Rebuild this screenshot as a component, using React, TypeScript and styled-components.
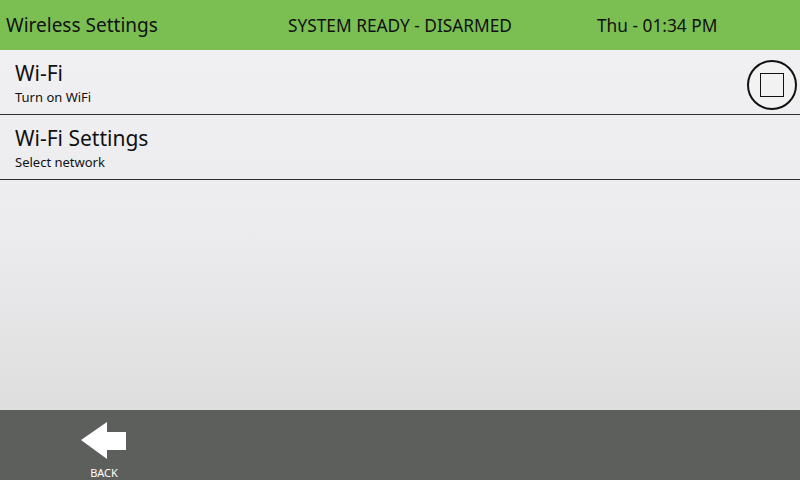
import React from 'react';
import styled, { createGlobalStyle } from 'styled-components';

const GlobalStyle = createGlobalStyle`
  html, body {
    margin: 0;
    padding: 0;
    width: 800px;
    height: 480px;
    overflow: hidden;
    font-family: "Noto Sans", "Open Sans", "DejaVu Sans", sans-serif;
  }
`;

const Screen = styled.div`
  width: 800px;
  height: 480px;
  display: flex;
  flex-direction: column;
`;

const Header = styled.header`
  height: 50px;
  background-color: #7bbf53;
  display: flex;
  align-items: center;
  color: #111;
  font-size: 17.3px;
`;

const Title = styled.div`
  width: 282px;
  padding-left: 6px;
  font-size: 19px;
`;

const Status = styled.div`
  width: 309px;
`;

const Clock = styled.div`
  flex: 1;
`;

const Content = styled.main`
  flex: 1;
  background: linear-gradient(to bottom, #f0eff1 0%, #ececee 50%, #dededf 100%);
`;

const Row = styled.div`
  box-sizing: border-box;
  height: 65px;
  border-bottom: 1px solid #2e2e2e;
  display: flex;
  align-items: flex-start;
  padding: 10px 3px 0 15px;
`;

const RowText = styled.div`
  flex: 1;
  display: flex;
  flex-direction: column;
`;

const RowTitle = styled.div`
  font-size: 21px;
  line-height: 26px;
  color: #111;
`;

const RowSub = styled.div`
  margin-top: 3px;
  font-size: 13px;
  line-height: 16px;
  color: #111;
`;

const CheckCircle = styled.div`
  width: 46px;
  height: 46px;
  border: 2px solid #111;
  border-radius: 50%;
  display: flex;
  align-items: center;
  justify-content: center;
  background: #f2f2f3;
`;

const CheckBox = styled.div`
  width: 22px;
  height: 22px;
  border: 1px solid #111;
`;

const Footer = styled.footer`
  height: 70px;
  background-color: #5d5f5c;
  display: flex;
  align-items: flex-start;
`;

const BackButton = styled.button`
  margin-left: 64px;
  width: 80px;
  height: 70px;
  border: none;
  background: transparent;
  padding: 12px 0 0 0;
  display: flex;
  flex-direction: column;
  align-items: center;
  color: #fff;
  font-family: "Noto Sans", "Open Sans", sans-serif;
  font-size: 11px;
  cursor: pointer;
`;

const BackLabel = styled.span`
  margin-top: 6px;
  line-height: 14px;
`;

const BackArrow = () => (
  <svg width="48" height="38" viewBox="0 0 48 38">
    <polygon points="1,18 27,0 27,10 46,10 46,28 27,28 27,37" fill="#fff" />
  </svg>
);

const App: React.FC = () => {
  return (
    <Screen>
      <GlobalStyle />
      <Header>
        <Title>Wireless Settings</Title>
        <Status>SYSTEM READY - DISARMED</Status>
        <Clock>Thu - 01:34 PM</Clock>
      </Header>
      <Content>
        <Row>
          <RowText>
            <RowTitle>Wi-Fi</RowTitle>
            <RowSub>Turn on WiFi</RowSub>
          </RowText>
          <CheckCircle>
            <CheckBox />
          </CheckCircle>
        </Row>
        <Row>
          <RowText>
            <RowTitle>Wi-Fi Settings</RowTitle>
            <RowSub>Select network</RowSub>
          </RowText>
        </Row>
      </Content>
      <Footer>
        <BackButton>
          <BackArrow />
          <BackLabel>BACK</BackLabel>
        </BackButton>
      </Footer>
    </Screen>
  );
};

export default App;
